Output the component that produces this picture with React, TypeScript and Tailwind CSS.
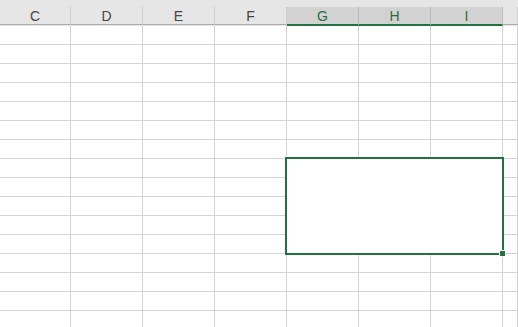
import React from 'react';

const columns = ['C', 'D', 'E', 'F', 'G', 'H', 'I', 'J'];
const widths = [71, 72, 72, 72, 72, 72, 72, 15];
const selectedCols = ['G', 'H', 'I'];
const ROWS = 16;

const App = () => {
    return (
        <div
            className="relative w-[518px] h-[327px] overflow-hidden bg-white"
            style={{ fontFamily: '"Liberation Sans", Arial, sans-serif' }}
        >
            {/* column headers */}
            <div className="flex h-[26px] bg-[#e6e6e6]">
                {columns.map((c, i) => {
                    const sel = selectedCols.includes(c);
                    return (
                        <div
                            key={c}
                            className="flex flex-col shrink-0"
                            style={{ width: widths[i] }}
                        >
                            <div className="h-[7px]" />
                            <div
                                className={
                                    sel
                                        ? 'flex-1 flex items-end justify-center border-r border-[#bdbdbd] bg-[#d2d2d2] border-b-2 border-b-[#217346] text-[#2b6b49] text-[14px] leading-none pb-[1px]'
                                        : 'flex-1 flex items-end justify-center border-r border-[#d0d0d0] border-b border-b-[#ababab] text-[#444444] text-[14px] leading-none pb-[1px] mb-[1px]'
                                }
                            >
                                {c !== 'J' && c}
                            </div>
                        </div>
                    );
                })}
            </div>

            {/* cell grid */}
            {Array.from({ length: ROWS }).map((_, r) => (
                <div key={r} className="flex h-[19px]">
                    {columns.map((c, i) => (
                        <div
                            key={c}
                            className="shrink-0 border-r border-b border-[#d4d4d4]"
                            style={{ width: widths[i] }}
                        />
                    ))}
                </div>
            ))}

            {/* merged active cell G7:I11 */}
            <div className="absolute left-[285px] top-[157px] w-[219px] h-[98px] border-2 border-[#217346] bg-white" />
            <div className="absolute left-[499px] top-[250px] w-[7px] h-[7px] bg-[#217346] border border-white" />
        </div>
    );
};

export default App;
